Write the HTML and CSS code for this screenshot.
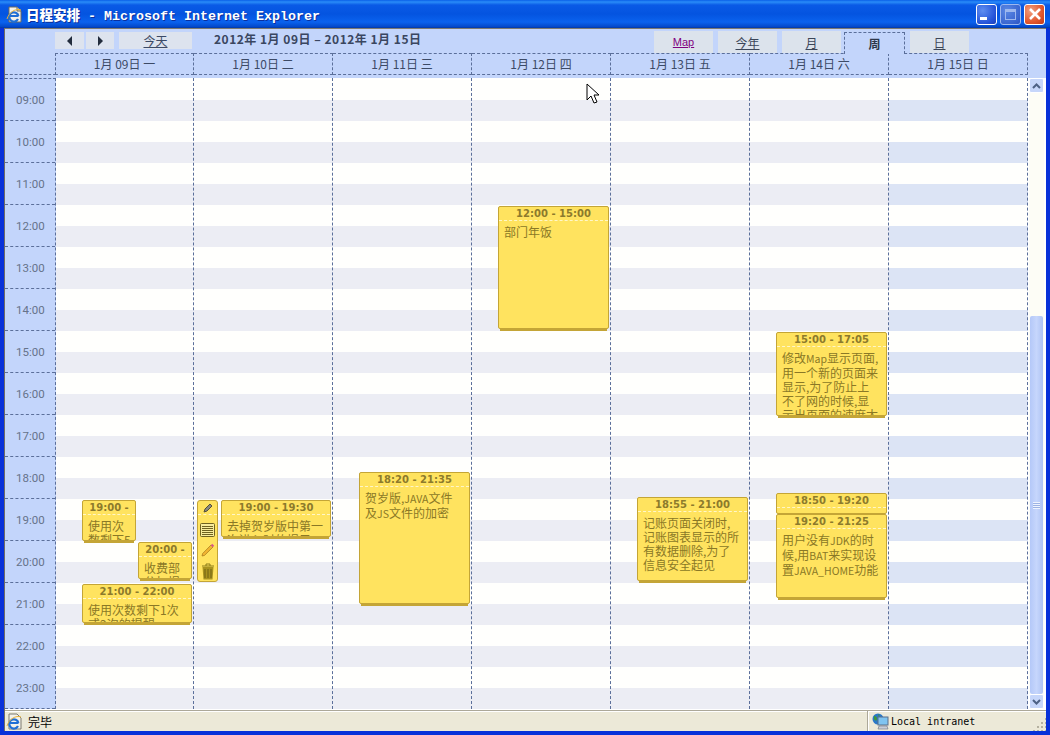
FILE: index.html
```html
<!DOCTYPE html>
<html lang="zh-CN">
<head>
    <meta charset="UTF-8">
    <title>日程安排 - Microsoft Internet Explorer</title>
    <link rel="stylesheet" href="styles.css">
</head>
<body>
<div class="window">
    <div class="titlebar">
        <svg class="app-icon" width="17" height="17" viewBox="0 0 17 17">
            <path d="M3 1h8l4 4v11H3z" fill="#f4f2ea" stroke="#6d6a60"/>
            <path d="M11 1v4h4" fill="#d8d5c8" stroke="#6d6a60"/>
            <path d="M4 10h8.500M12 13a4.600 4.600 0 1 1 .4-3" fill="none" stroke="#1f6fd6" stroke-width="2.200"/>
            <path d="M1 13C3 6 10 2 15 4" fill="none" stroke="#e8b23a"/>
        </svg>
        <span class="title-text"><b>日程安排</b> - Microsoft Internet Explorer</span>
        <div class="win-buttons">
            <div class="win-btn win-min"><span class="min-bar"></span></div>
            <div class="win-btn win-max"><span class="max-box"></span></div>
            <div class="win-btn win-close">
                <svg width="14" height="14" viewBox="0 0 14 14"><path d="M2 2l10 10M12 2L2 12" stroke="#fff" stroke-width="2.600"/></svg>
            </div>
        </div>
    </div>

    <div class="content">
        <div class="toolbar">
            <div class="btn btn-nav"><span class="arrow-left"></span></div>
            <div class="btn btn-nav btn-next"><span class="arrow-right"></span></div>
            <div class="btn btn-today"><u>今天</u></div>
            <div class="range-title">2012年 1月 09日 – 2012年 1月 15日</div>
            <div class="tabs">
                <div class="tab"><a class="map-link">Map</a></div>
                <div class="tab"><u>今年</u></div>
                <div class="tab"><u>月</u></div>
                <div class="tab tab-active">周</div>
                <div class="tab"><u>日</u></div>
            </div>
        </div>

        <div class="head-row">
            <div class="head-corner"></div>
            <div class="head-day">1月 09日 一</div>
            <div class="head-day">1月 10日 二</div>
            <div class="head-day">1月 11日 三</div>
            <div class="head-day">1月 12日 四</div>
            <div class="head-day">1月 13日 五</div>
            <div class="head-day">1月 14日 六</div>
            <div class="head-day">1月 15日 日</div>
        </div>

        <div class="body-row">
            <div class="times">
                <div class="time-cell">09:00</div>
                <div class="time-cell">10:00</div>
                <div class="time-cell">11:00</div>
                <div class="time-cell">12:00</div>
                <div class="time-cell">13:00</div>
                <div class="time-cell">14:00</div>
                <div class="time-cell">15:00</div>
                <div class="time-cell">16:00</div>
                <div class="time-cell">17:00</div>
                <div class="time-cell">18:00</div>
                <div class="time-cell">19:00</div>
                <div class="time-cell">20:00</div>
                <div class="time-cell">21:00</div>
                <div class="time-cell">22:00</div>
                <div class="time-cell">23:00</div>
            </div>

            <div class="day">
                <div class="event" style="left:26px;top:422px;width:54px;height:41px">
                    <div class="event-time">19:00 -</div>
                    <div class="event-text">使用次<br>数剩下5</div>
                </div>
                <div class="event" style="left:82px;top:464px;width:54px;height:37px">
                    <div class="event-time">20:00 -</div>
                    <div class="event-text">收费部<br>分加提</div>
                </div>
                <div class="event" style="left:26px;top:506px;width:110px;height:39px">
                    <div class="event-time">21:00 - 22:00</div>
                    <div class="event-text">使用次数剩下1次<br>或2次的提醒</div>
                </div>
            </div>

            <div class="day">
                <div class="tool-panel" style="left:3px;top:422px;width:21px;height:82px">
                    <div class="tool-top">
                        <svg width="12" height="12" viewBox="0 0 12 12"><path d="M2 10l1-3 5-5 2 2-5 5z" fill="#8a8a80" stroke="#55503a"/></svg>
                    </div>
                    <svg class="tool-icon" width="15" height="14" viewBox="0 0 15 14">
                        <rect x=".5" y=".5" width="14" height="13" rx="1" fill="#f8ec9c" stroke="#6f6220"/>
                        <path d="M2 3.500h11M2 5.500h11M2 7.500h11M2 9.500h11M2 11.500h11" stroke="#6f6220"/>
                    </svg>
                    <svg class="tool-icon" width="14" height="14" viewBox="0 0 14 14">
                        <path d="M1 13l.6-2.400L10 2l2 2-8.500 8.400z" fill="#f2b632" stroke="#a5761a" stroke-width=".7"/>
                        <path d="M10.500 1.500l2 2" stroke="#d8578a" stroke-width="2"/>
                    </svg>
                    <svg class="tool-icon" width="14" height="17" viewBox="0 0 14 17">
                        <path d="M1 3h12M5 3V1h4v2" fill="none" stroke="#8a7a18"/>
                        <path d="M1.500 4h11l-1 12.500h-9z" fill="#a8921f"/>
                        <path d="M4 6v9M7 6v9M10 6v9" stroke="#6f6012"/>
                    </svg>
                </div>
                <div class="event" style="left:27px;top:422px;width:110px;height:37px">
                    <div class="event-time">19:00 - 19:30</div>
                    <div class="event-text">去掉贺岁版中第一<br>次进入时的提示</div>
                </div>
            </div>

            <div class="day">
                <div class="event" style="left:26px;top:394px;width:111px;height:132px">
                    <div class="event-time">18:20 - 21:35</div>
                    <div class="event-text">贺岁版,<span class="latin">JAVA</span>文件<br>及<span class="latin">JS</span>文件的加密</div>
                </div>
            </div>

            <div class="day">
                <div class="event" style="left:26px;top:128px;width:111px;height:123px">
                    <div class="event-time">12:00 - 15:00</div>
                    <div class="event-text">部门年饭</div>
                </div>
            </div>

            <div class="day">
                <div class="event" style="left:26px;top:419px;width:111px;height:84px">
                    <div class="event-time">18:55 - 21:00</div>
                    <div class="event-text">记账页面关闭时,<br>记账图表显示的所<br>有数据删除,为了<br>信息安全起见</div>
                </div>
            </div>

            <div class="day">
                <div class="event" style="left:26px;top:254px;width:111px;height:84px">
                    <div class="event-time">15:00 - 17:05</div>
                    <div class="event-text">修改<span class="latin">Map</span>显示页面,<br>用一个新的页面来<br>显示,为了防止上<br>不了网的时候,显<br>示出页面的速度太</div>
                </div>
                <div class="event" style="left:26px;top:415px;width:111px;height:21px">
                    <div class="event-time">18:50 - 19:20</div>
                </div>
                <div class="event" style="left:26px;top:436px;width:111px;height:84px">
                    <div class="event-time">19:20 - 21:25</div>
                    <div class="event-text">用户没有<span class="latin">JDK</span>的时<br>候,用<span class="latin">BAT</span>来实现设<br>置<span class="latin">JAVA_HOME</span>功能</div>
                </div>
            </div>

            <div class="day day-last"></div>

            <div class="scrollbar">
                <div class="scroll-btn">
                    <svg width="9" height="6" viewBox="0 0 9 6"><path d="M1 5l3.500-3.500L8 5" fill="none" stroke="#4d6185" stroke-width="2"/></svg>
                </div>
                <div class="scroll-track">
                    <div class="scroll-thumb"><span class="grip"></span></div>
                </div>
                <div class="scroll-btn">
                    <svg width="9" height="6" viewBox="0 0 9 6"><path d="M1 1l3.500 3.500L8 1" fill="none" stroke="#4d6185" stroke-width="2"/></svg>
                </div>
            </div>
        </div>

        <div class="statusbar">
            <svg class="status-icon" width="17" height="17" viewBox="0 0 17 17">
                <path d="M3 1h8l4 4v11H3z" fill="#f4f2ea" stroke="#7d7a70"/>
                <path d="M4 10h8.500M12 13a4.600 4.600 0 1 1 .4-3" fill="none" stroke="#1f6fd6" stroke-width="2.200"/>
                <path d="M1 13C3 6 10 2 15 4" fill="none" stroke="#e8b23a"/>
            </svg>
            <span class="status-text">完毕</span>
            <div class="status-zone">
                <svg class="zone-icon" width="17" height="17" viewBox="0 0 17 17">
                    <circle cx="6" cy="6" r="5.500" fill="#2a78c8"/>
                    <path d="M2 3c2 0 3 1 3 3S3 8 2 6zM6 1c2 1 2 3 1 4z" fill="#3f9a3a"/>
                    <rect x="6" y="4" width="10" height="8" fill="#7fc4f0" stroke="#5a6f8a"/>
                    <path d="M7 13h8l1 3H6z" fill="#c9cdd6" stroke="#6b7280" stroke-width=".6"/>
                </svg>
                <span class="zone-text">Local intranet</span>
            </div>
            <div class="size-grip"></div>
        </div>
    </div>

    <svg class="cursor" width="14" height="22" viewBox="0 0 14 22">
        <path d="M1 1v16l4-4 3 7 3-1-3-7h5z" fill="#fff" stroke="#000"/>
    </svg>
</div>
</body>
</html>
```

FILE: styles.css
```css
html, body { margin: 0; padding: 0; }
body { width: 1050px; height: 735px; overflow: hidden; font-family: "Noto Sans CJK SC", sans-serif; font-size: 12px; color: #3c4a66; }

.window { position: relative; display: flex; flex-direction: column; width: 1050px; height: 735px; box-sizing: border-box; background: #0831d9; padding: 0 4px 4px; }

/* title bar */
.titlebar { display: flex; align-items: center; flex: 0 0 28px; margin: 0 -4px; padding: 0 5px 0 6px; background: linear-gradient(#0a5fe8 0, #2a8cf8 2px, #0a5ae6 5px, #0454e0 14px, #0a62ee 22px, #0347c8 27px, #02349c 28px); }
.app-icon { flex: none; margin-right: 3px; }
.title-text { flex: 1; font-family: "Liberation Mono", "Noto Sans CJK SC", monospace; font-weight: bold; font-size: 13.330px; color: #fff; text-shadow: 1px 1px 0 #0b2f9c; white-space: pre; }
.title-text b { font-family: "Noto Sans CJK SC", sans-serif; font-size: 13.500px; }
.win-buttons { display: flex; gap: 3px; }
.win-btn { display: flex; align-items: center; justify-content: center; width: 19px; height: 19px; border: 1px solid #fff; border-radius: 3px; background: radial-gradient(circle at 30% 30%, #5f8ef0, #2352d8 70%, #1a3fb8); }
.win-max { border-color: #9db8ee; background: radial-gradient(circle at 30% 30%, #5a88e4, #3a66d0 70%, #2c55c2); }
.win-close { background: radial-gradient(circle at 30% 30%, #f0a080, #e2582e 60%, #c23a18); }
.min-bar { width: 7px; height: 3px; margin: 9px 7px 0 0; background: #fff; }
.max-box { width: 11px; height: 11px; border: 1px solid #9db8ee; border-top-width: 3px; box-sizing: border-box; }

/* main area */
.content { display: flex; flex-direction: column; flex: 1; min-height: 0; background: #fff; border-left: 1px solid #6f6c64; border-top: 1px solid #7c7a72; }

.toolbar { display: flex; align-items: flex-start; flex: 0 0 24px; padding-left: 50px; background: #c3d5fb; }
.btn { display: flex; align-items: center; justify-content: center; height: 17px; margin-top: 3px; background: #dde3ee; }
.btn-nav { width: 29px; }
.btn-next { width: 28px; margin-left: 2px; }
.btn-today { width: 73px; margin-left: 5px; }
.arrow-left { border: 5px solid transparent; border-left: 0; border-right: 5px solid #222c3c; }
.arrow-right { border: 5px solid transparent; border-right: 0; border-left: 5px solid #222c3c; }
.range-title { margin: 1px 0 0 22px; font-weight: bold; font-size: 12px; line-height: 17px; letter-spacing: .5px; color: #3a4660; white-space: nowrap; }
.tabs { display: flex; margin-left: auto; margin-right: 77px; gap: 5px; }
.tab { display: flex; align-items: center; justify-content: center; width: 59px; height: 22px; margin-top: 2px; background: #dce3ec; color: #3c4658; }
.map-link { color: #800080; text-decoration: underline; font-family: "Liberation Sans", sans-serif; font-size: 11px; }
.tab-active { position: relative; z-index: 1; box-sizing: border-box; width: 61px; height: 22px; margin: 3px 0 -1px -2px; background: #c3d5fb; border: 1px dashed #5b6f9a; border-bottom: 0; font-weight: bold; color: #2c3648; }

.head-row { display: grid; grid-template-columns: 51px 138px repeat(5, 139px) 139px; flex: 0 0 25px; background: #c3d5fb; }
.head-corner { height: 21px; border-bottom: 1px dashed #5b6f9a; border-right: 1px dashed transparent; }
.head-day { height: 20px; border-top: 1px dashed #5b6f9a; border-bottom: 1px dashed #5b6f9a; border-right: 1px dashed #5b6f9a; text-align: center; line-height: 20px; white-space: nowrap; }
.head-day:nth-child(2) { border-left: 1px dashed #5b6f9a; margin-left: -1px; }

.body-row { display: grid; grid-template-columns: 51px 138px repeat(5, 139px) 139px 18px; flex: 0 0 631px; background: #fff; }
.times { background: #c3d5fb; border-top: 1px dashed #5b6f9a; border-right: 1px dashed #5b6f9a; overflow: hidden; }
.time-cell { box-sizing: border-box; height: 42px; border-bottom: 1px dashed #5b6f9a; font-family: Roboto, sans-serif; font-size: 11.500px; line-height: 43px; padding-left: 11px; color: #66738a; }
.day { position: relative; border-right: 1px dashed #5b6f9a; background: repeating-linear-gradient(#fffffd 0, #fffffd 21px, #ecedf4 21px, #ecedf4 42px) 0 1px; overflow: hidden; }
.day-last { background: repeating-linear-gradient(#fffffd 0, #fffffd 21px, #dce4f5 21px, #dce4f5 42px) 0 1px; }

/* events */
.event { position: absolute; box-sizing: border-box; background: #ffe35f; border: 1px solid #c4a536; border-radius: 2px; box-shadow: 0 4px 0 -2px #c4a536; color: #8a7826; }
.event-time { box-sizing: border-box; height: 14px; border-bottom: 1px dashed #fff6c8; font-family: "DejaVu Sans", sans-serif; font-weight: bold; font-size: 10px; line-height: 13px; text-align: center; white-space: nowrap; overflow: hidden; color: #8c7a2c; }
.event-text { height: calc(100% - 14px); padding: 4px 0 0 5px; box-sizing: border-box; line-height: 14px; white-space: nowrap; overflow: hidden; }
.latin { font-size: 10.500px; }

.tool-panel { position: absolute; box-sizing: border-box; display: flex; flex-direction: column; align-items: center; background: #ffe35f; border: 1px solid #c4a536; border-radius: 3px; }
.tool-top { display: flex; justify-content: center; align-items: center; align-self: stretch; flex: none; height: 13px; border-bottom: 1px dashed #fff6c8; }
.tool-icon { flex: none; margin-top: 8px; }
.tool-icon + .tool-icon { margin-top: 6px; }

/* scrollbar */
.scrollbar { display: flex; flex-direction: column; box-sizing: border-box; padding: 0 2px 0 1px; }
.scroll-btn { display: flex; align-items: center; justify-content: center; flex: 0 0 15px; background: #c6d6fa; border: 1px solid #fff; box-sizing: border-box; border-radius: 2px; }
.scroll-track { flex: 1; display: flex; flex-direction: column; background: #fdfdf6; }
.scroll-thumb { display: flex; align-items: center; justify-content: center; margin: 223px 1px 0; flex: 1; background: linear-gradient(90deg, #b4c8f8, #c6d6fc 50%, #b0c4f4); border-radius: 2px; }
.grip { width: 7px; height: 7px; background: repeating-linear-gradient(#eef3ff 0, #eef3ff 1px, #9db3e4 1px, #9db3e4 2px); }

/* status bar */
.statusbar { display: flex; align-items: center; flex: 1; min-height: 0; margin-top: 1px; border-top: 1px solid #aca899; background: #ece9d8; color: #000; box-shadow: inset 0 1px 0 #fff; }
.status-icon { flex: none; margin: 0 3px 0 1px; }
.status-text { flex: 1; font-size: 12px; margin-left: 2px; }
.status-zone { display: flex; align-items: center; align-self: stretch; width: 165px; box-sizing: border-box; padding-left: 4px; border-left: 1px solid #aca899; box-shadow: inset 1px 0 0 #fff; }
.zone-icon { flex: none; margin-right: 2px; }
.zone-text { font-family: "DejaVu Sans Mono", monospace; font-size: 10px; }
.size-grip { align-self: flex-end; width: 14px; height: 14px; background: radial-gradient(circle, #b5b1a0 1px, transparent 1.200px) 0 0 / 4px 4px; clip-path: polygon(100% 0, 100% 100%, 0 100%); }

.cursor { position: absolute; left: 586px; top: 83px; }
```
